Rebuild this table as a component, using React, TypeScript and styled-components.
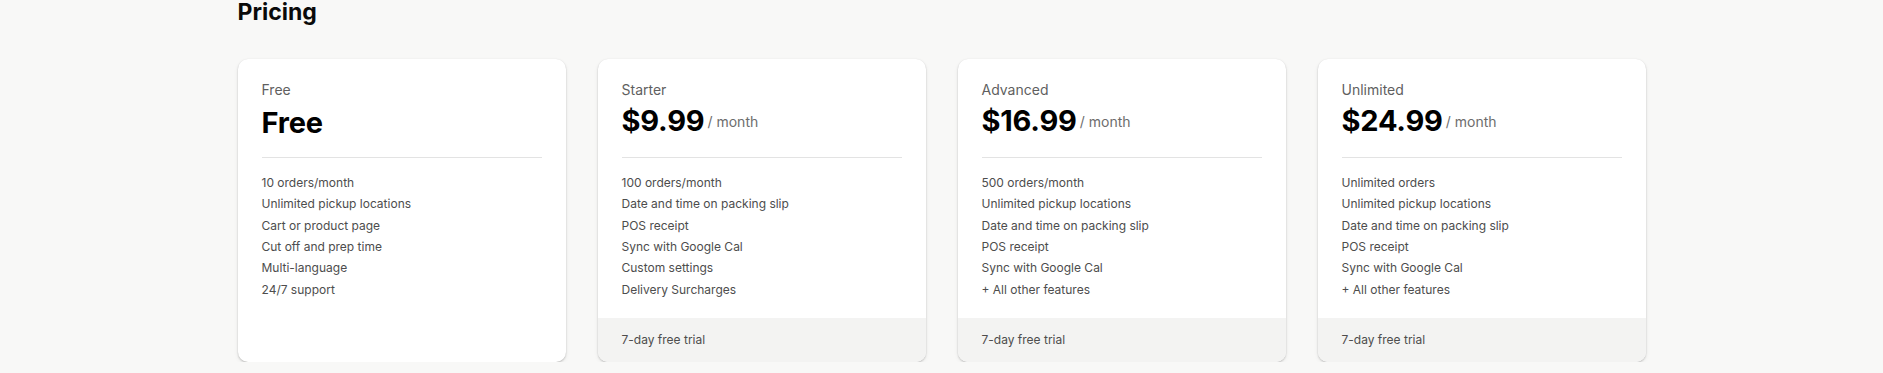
import React from "react";
import styled, { createGlobalStyle } from "styled-components";

const GlobalStyle = createGlobalStyle`
  html, body {
    margin: 0;
    padding: 0;
    background: #f8f8f7;
    font-family: Inter, "Noto Sans", sans-serif;
    -webkit-font-smoothing: antialiased;
  }
`;

const Page = styled.main`
  width: 1408px;
  margin: 0 auto;
`;

const Title = styled.h1`
  margin: 0;
  font-size: 23px;
  line-height: 24px;
  font-weight: 700;
  color: #0a0a0a;
`;

const Grid = styled.div`
  margin-top: 35px;
  display: grid;
  grid-template-columns: repeat(4, 328px);
  column-gap: 32px;
  align-items: stretch;
`;

const Card = styled.section`
  display: flex;
  flex-direction: column;
  background: #ffffff;
  border-radius: 10px;
  overflow: hidden;
  box-shadow: 0 1px 2px rgba(0, 0, 0, 0.2), 0 2px 5px rgba(0, 0, 0, 0.06),
    0 0 1px rgba(0, 0, 0, 0.06);
`;

const Body = styled.div`
  flex: 1;
  padding: 24px 24px 18px;
`;

const Label = styled.div`
  font-size: 14px;
  line-height: 14px;
  color: #5f5f5f;
`;

const PriceRow = styled.div`
  margin-top: 8px;
  height: 36px;
  display: flex;
  align-items: flex-start;
  gap: 3px;
`;

const Price = styled.span<{ $solo?: boolean }>`
  font-size: 29px;
  line-height: ${(p) => (p.$solo ? "36px" : "32px")};
  font-weight: 700;
  color: #000000;
  letter-spacing: -0.2px;
`;

const Period = styled.span`
  margin-top: 7px;
  font-size: 14px;
  line-height: 20px;
  color: #6d6d6d;
`;

const Divider = styled.hr`
  margin: 16px 0 0;
  border: 0;
  height: 1px;
  background: #e3e3e3;
`;

const Features = styled.ul`
  list-style: none;
  margin: 14px 0 0;
  padding: 0;
`;

const Feature = styled.li`
  font-size: 12px;
  line-height: 21.33px;
  color: #4d4d4d;
`;

const Footer = styled.div`
  background: #f3f3f2;
  padding: 14px 24px;
  font-size: 12px;
  line-height: 16px;
  color: #4d4d4d;
`;

type Plan = {
  name: string;
  price: string;
  period?: string;
  features: string[];
  trial?: string;
};

const plans: Plan[] = [
  {
    name: "Free",
    price: "Free",
    features: [
      "10 orders/month",
      "Unlimited pickup locations",
      "Cart or product page",
      "Cut off and prep time",
      "Multi-language",
      "24/7 support",
    ],
  },
  {
    name: "Starter",
    price: "$9.99",
    period: "/ month",
    features: [
      "100 orders/month",
      "Date and time on packing slip",
      "POS receipt",
      "Sync with Google Cal",
      "Custom settings",
      "Delivery Surcharges",
    ],
    trial: "7-day free trial",
  },
  {
    name: "Advanced",
    price: "$16.99",
    period: "/ month",
    features: [
      "500 orders/month",
      "Unlimited pickup locations",
      "Date and time on packing slip",
      "POS receipt",
      "Sync with Google Cal",
      "+ All other features",
    ],
    trial: "7-day free trial",
  },
  {
    name: "Unlimited",
    price: "$24.99",
    period: "/ month",
    features: [
      "Unlimited orders",
      "Unlimited pickup locations",
      "Date and time on packing slip",
      "POS receipt",
      "Sync with Google Cal",
      "+ All other features",
    ],
    trial: "7-day free trial",
  },
];

export default function App() {
  return (
    <>
      <GlobalStyle />
      <Page>
        <Title>Pricing</Title>
        <Grid>
          {plans.map((plan) => (
            <Card key={plan.name}>
              <Body>
                <Label>{plan.name}</Label>
                <PriceRow>
                  <Price $solo={!plan.period}>{plan.price}</Price>
                  {plan.period && <Period>{plan.period}</Period>}
                </PriceRow>
                <Divider />
                <Features>
                  {plan.features.map((f) => (
                    <Feature key={f}>{f}</Feature>
                  ))}
                </Features>
              </Body>
              {plan.trial && <Footer>{plan.trial}</Footer>}
            </Card>
          ))}
        </Grid>
      </Page>
    </>
  );
}
